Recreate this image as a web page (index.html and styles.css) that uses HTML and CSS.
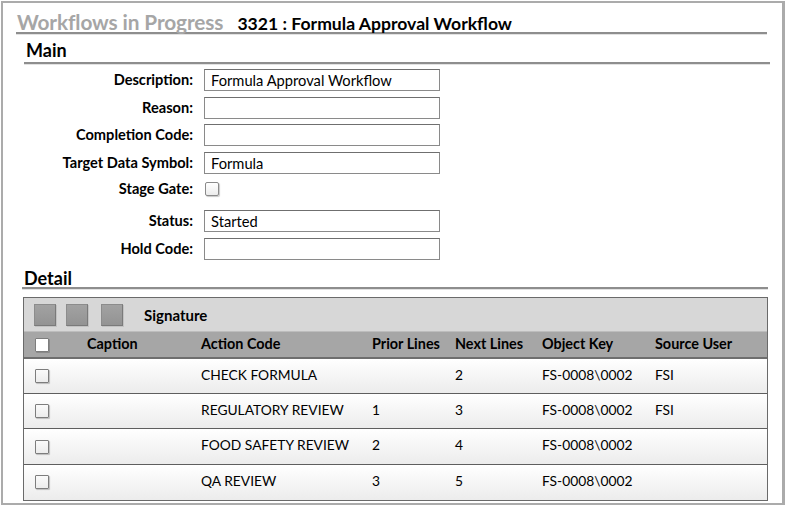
FILE: index.html
```html
<!DOCTYPE html>
<html>
<head>
<meta charset="utf-8">
<link rel="stylesheet" href="styles.css">
</head>
<body>
<div class="frame">
  <div class="titlebar">
    <span class="title-muted">Workflows in Progress</span>
    <span class="title-main">3321 : Formula Approval Workflow</span>
  </div>

  <div class="section">
    <div class="section-head">Main</div>
    <div class="form">
      <div class="frow"><label class="flabel">Description:</label><div class="finput">Formula Approval Workflow</div></div>
      <div class="frow"><label class="flabel">Reason:</label><div class="finput"></div></div>
      <div class="frow"><label class="flabel">Completion Code:</label><div class="finput"></div></div>
      <div class="frow"><label class="flabel">Target Data Symbol:</label><div class="finput">Formula</div></div>
      <div class="frow frow-check"><label class="flabel">Stage Gate:</label><div class="fcheck"></div></div>
      <div class="frow"><label class="flabel">Status:</label><div class="finput">Started</div></div>
      <div class="frow"><label class="flabel">Hold Code:</label><div class="finput"></div></div>
    </div>
  </div>

  <div class="section detail">
    <div class="section-head">Detail</div>
    <div class="grid">
      <div class="toolbar">
        <span class="tbtn"></span>
        <span class="tbtn"></span>
        <span class="tbtn tbtn-last"></span>
        <span class="tlabel">Signature</span>
      </div>
      <div class="row head">
        <div class="c c-chk"><span class="chk chk-white"></span></div>
        <div class="c">Caption</div>
        <div class="c">Action Code</div>
        <div class="c">Prior Lines</div>
        <div class="c">Next Lines</div>
        <div class="c">Object Key</div>
        <div class="c">Source User</div>
      </div>
      <div class="row data">
        <div class="c c-chk"><span class="chk"></span></div>
        <div class="c"></div>
        <div class="c">CHECK FORMULA</div>
        <div class="c"></div>
        <div class="c">2</div>
        <div class="c">FS-0008\0002</div>
        <div class="c">FSI</div>
      </div>
      <div class="row data">
        <div class="c c-chk"><span class="chk"></span></div>
        <div class="c"></div>
        <div class="c">REGULATORY REVIEW</div>
        <div class="c">1</div>
        <div class="c">3</div>
        <div class="c">FS-0008\0002</div>
        <div class="c">FSI</div>
      </div>
      <div class="row data">
        <div class="c c-chk"><span class="chk"></span></div>
        <div class="c"></div>
        <div class="c">FOOD SAFETY REVIEW</div>
        <div class="c">2</div>
        <div class="c">4</div>
        <div class="c">FS-0008\0002</div>
        <div class="c"></div>
      </div>
      <div class="row data last">
        <div class="c c-chk"><span class="chk"></span></div>
        <div class="c"></div>
        <div class="c">QA REVIEW</div>
        <div class="c">3</div>
        <div class="c">5</div>
        <div class="c">FS-0008\0002</div>
        <div class="c"></div>
      </div>
    </div>
  </div>
</div>
</body>
</html>
```

FILE: styles.css
```css
* { box-sizing: border-box; }
html, body { margin: 0; padding: 0; background: #ffffff; }
body {
  font-family: Lato, "Noto Sans", "Liberation Sans", sans-serif;
  color: #000;
  width: 786px;
  height: 508px;
  overflow: hidden;
}
.frame {
  margin: 1px 0 0 1px;
  width: 784px;
  height: 504px;
  border: 2px solid #ababab;
  border-right-width: 3px;
  padding: 0 14px 0 13px;
  display: flex;
  flex-direction: column;
}
.titlebar {
  display: flex;
  align-items: baseline;
  gap: 14px;
  height: 31px;
  padding: 6px 0 0 1px;
  border-bottom: 2px solid #8e8e8e;
  box-shadow: 0 1px 0 #e2e2e2;
  margin-right: 1px;
}
.title-muted {
  color: #a6a6a6;
  font-weight: 700;
  font-size: 20.8px;
  letter-spacing: -0.1px;
}
.title-main {
  font-weight: 700;
  font-size: 17.6px;
}
.section { margin-left: 8px; }
.section-head {
  font-weight: 700;
  font-size: 18px;
  height: 30px;
  padding: 5px 0 0 2px;
  border-bottom: 2px solid #8e8e8e;
  box-shadow: 0 1px 0 #e2e2e2;
  margin-right: -2px;
}
.form {
  padding-top: 5px;
  display: flex;
  flex-direction: column;
  gap: 5.6px;
}
.frow {
  display: flex;
  align-items: center;
  height: 22px;
  gap: 11px;
}
.frow-check {
  height: 25px;
  align-items: flex-start;
}
.flabel {
  width: 169px;
  text-align: right;
  font-weight: 700;
  font-size: 14.6px;
  line-height: 20px;
}
.finput {
  width: 236px;
  height: 22px;
  border: 1px solid #8a8a8a;
  border-top-color: #6f6f6f;
  padding: 0 6px;
  font-size: 14.7px;
  line-height: 20px;
  background: #fff;
}
.fcheck {
  width: 14px;
  height: 14px;
  margin: 3px 0 0 1px;
  border: 1px solid #8a8a8a;
  border-radius: 2px;
  background: linear-gradient(#ffffff, #ececec);
  box-shadow: 1px 1px 1px #c8c8c8;
}
.detail { margin-top: 3.5px; }
.detail .section-head {
  padding-top: 4px;
  height: 26px;
  margin-left: -2px;
  margin-right: 0;
}
.grid {
  margin: 8px 0 0 -1px;
  width: 745px;
  border: 1px solid #6a6a6a;
  display: flex;
  flex-direction: column;
}
.toolbar {
  height: 34px;
  background: #d7d7d7;
  display: flex;
  align-items: center;
  padding-left: 10px;
  border-bottom: 1px solid #bdbdbd;
}
.tbtn {
  width: 22px;
  height: 22px;
  margin-right: 10px;
  background: linear-gradient(#a2a2a2, #939393);
  border: 1px solid #7a7a7a;
  border-top-color: #8c8c8c;
  border-left-color: #8c8c8c;
  box-shadow: 1px 1px 0 #c2c2c2;
}
.tbtn:nth-child(2) { margin-right: 13px; }
.tbtn-last { margin-right: 21px; }
.tlabel { font-weight: 700; font-size: 15px; }
.row {
  display: grid;
  grid-template-columns: 63px 114px 171px 83px 87px 113px 1fr;
  align-items: center;
}
.head {
  height: 27px;
  background: #a6a6a6;
  font-weight: 700;
  font-size: 14.4px;
  border-bottom: 2px solid #6e6e6e;
  padding-bottom: 3px;
}
.head .c-chk { margin-top: 3px; }
.data {
  height: 35.2px;
  font-size: 13.8px;
  background: linear-gradient(#ffffff, #ececec);
  border-bottom: 1px solid #5e5e5e;
  padding-bottom: 4px;
}
.data .c-chk { margin-top: 4px; }
.data.last { border-bottom: none; }
.c-chk { padding-left: 11px; display: flex; align-items: center; }
.chk {
  display: inline-block;
  width: 14px;
  height: 14px;
  border: 1px solid #7d7d7d;
  border-radius: 1px;
  background: linear-gradient(#fafafa, #ececec);
  box-shadow: 1px 1px 1px #bdbdbd;
}
.chk-white { background: #ffffff; box-shadow: 1px 1px 0 #8a8a8a; }
```
